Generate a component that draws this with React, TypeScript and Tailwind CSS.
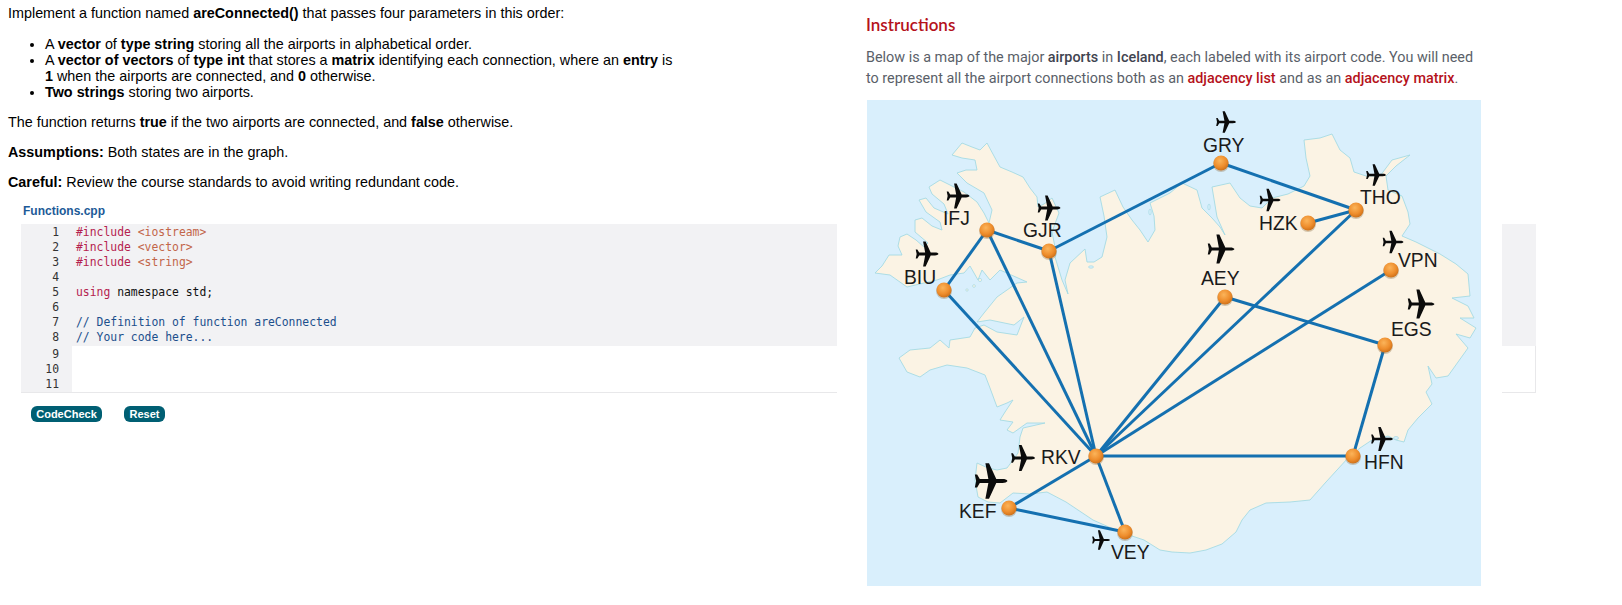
const nodes: Record<string, [number, number]> = {
  IFJ: [987, 230],
  GJR: [1049, 251],
  BIU: [944, 290],
  GRY: [1221, 163],
  THO: [1356, 210],
  HZK: [1308, 223],
  VPN: [1391, 270],
  AEY: [1225, 297],
  EGS: [1385, 345],
  RKV: [1096, 456],
  KEF: [1009, 508],
  VEY: [1125, 532],
  HFN: [1353, 456],
};

const edges = [
  ['IFJ', 'GJR'],
  ['IFJ', 'BIU'],
  ['IFJ', 'RKV'],
  ['BIU', 'RKV'],
  ['GJR', 'RKV'],
  ['GJR', 'GRY'],
  ['GRY', 'THO'],
  ['HZK', 'THO'],
  ['THO', 'RKV'],
  ['AEY', 'RKV'],
  ['AEY', 'EGS'],
  ['VPN', 'RKV'],
  ['EGS', 'HFN'],
  ['RKV', 'HFN'],
  ['RKV', 'KEF'],
  ['RKV', 'VEY'],
  ['KEF', 'VEY'],
];

// label: text, x, baseline y
const labels: [string, number, number][] = [
  ['GRY', 1203, 152],
  ['THO', 1360, 204],
  ['HZK', 1259, 230],
  ['VPN', 1398, 267],
  ['AEY', 1201, 285],
  ['EGS', 1391, 336],
  ['IFJ', 943, 225],
  ['GJR', 1023, 237],
  ['BIU', 904, 284],
  ['RKV', 1041, 464],
  ['KEF', 959, 518],
  ['VEY', 1111, 559],
  ['HFN', 1364, 469],
];

// plane: centre x, centre y, width
const planes: [number, number, number][] = [
  [1226, 122, 20],
  [1376, 175, 20],
  [1270, 200, 21],
  [1221, 249, 27],
  [1393, 242, 21],
  [1421, 304, 27],
  [958, 196, 23],
  [1049, 208, 23],
  [927, 254, 23],
  [1023, 458, 24],
  [991, 481, 33],
  [1101, 540, 18],
  [1382, 439, 22],
];

const ICELAND =
  'M875 273 L882 266 L889 255 L902 255 L898 246 L900 237 L907 234 L916 240 L924 247 L928 243 L915 232 L915 220 L922 218 L932 226 L942 230 L940 222 L926 212 L919 200 L926 198 L934 208 L948 214 L944 204 L932 194 L929 187 L940 180 L952 186 L964 192 L977 202 L984 213 L989 223 L992 210 L984 193 L967 183 L957 173 L966 170 L977 170 L975 160 L962 158 L952 155 L962 143 L972 147 L980 150 L987 143 L994 156 L1000 167 L1012 172 L1023 177 L1030 188 L1037 197 L1038 207 L1044 204 L1052 198 L1059 213 L1052 232 L1056 252 L1055 257 L1062 280 L1068 294 L1065 280 L1070 263 L1085 249 L1087 262 L1094 262 L1102 257 L1107 237 L1104 216 L1100 197 L1115 190 L1123 207 L1132 220 L1140 230 L1148 242 L1155 230 L1154 216 L1150 203 L1160 198 L1170 193 L1182 183 L1197 190 L1202 208 L1212 218 L1220 227 L1225 235 L1217 217 L1212 187 L1230 183 L1240 198 L1250 206 L1262 208 L1272 198 L1288 194 L1304 186 L1310 176 L1306 158 L1304 140 L1320 138 L1332 134 L1340 150 L1350 158 L1354 172 L1366 176 L1380 176 L1392 160 L1410 155 L1396 166 L1386 176 L1388 190 L1402 196 L1408 212 L1410 224 L1402 236 L1416 242 L1440 254 L1456 264 L1468 274 L1470 296 L1452 298 L1468 306 L1474 318 L1460 318 L1476 328 L1470 338 L1456 334 L1468 348 L1448 376 L1436 378 L1428 366 L1432 384 L1426 392 L1432 404 L1418 418 L1408 430 L1404 442 L1396 440 L1388 436 L1372 440 L1360 448 L1348 458 L1326 482 L1310 500 L1290 502 L1266 503 L1250 510 L1242 520 L1236 532 L1222 544 L1206 550 L1190 553 L1172 552 L1160 550 L1144 540 L1120 532 L1093 520 L1066 502 L1047 492 L1030 494 L1013 493 L1000 503 L988 502 L978 497 L975 480 L977 463 L988 468 L997 470 L1007 468 L1018 453 L1020 437 L1023 428 L1045 423 L1027 423 L1013 433 L1007 430 L1013 422 L1000 420 L1005 412 L1013 400 L1007 403 L997 407 L990 388 L985 375 L967 368 L947 365 L930 370 L920 377 L907 372 L899 358 L910 350 L930 348 L940 340 L949 348 L950 340 L970 337 L975 328 L984 325 L997 332 L1017 335 L1024 317 L1014 325 L990 320 L977 322 L984 313 L997 297 L1017 283 L1027 282 L1000 270 L990 280 L982 270 L978 280 L970 266 L964 273 L950 275 L937 280 L924 283 L907 287 L890 275 Z';

function Plane({ x, y, w }: { x: number; y: number; w: number }) {
  const s = w / 100;
  return (
    <path
      transform={`translate(${x - w / 2} ${y}) scale(${s})`}
      fill="#0b0b0b"
      d="M100 0 C98 -4 92 -6 85 -6 L66 -6 L44 -54 L33 -54 L42 -6 L16 -6 L8 -20 L1 -20 L5 0 L1 20 L8 20 L16 6 L42 6 L33 54 L44 54 L66 6 L85 6 C92 6 98 4 100 0 Z"
    />
  );
}

function IcelandMap() {
  return (
    <svg viewBox="867 100 614 486" className="block w-[614px] h-[486px]">
      <defs>
        <radialGradient id="ball" cx="42%" cy="35%" r="70%">
          <stop offset="0%" stopColor="#fbb45a" />
          <stop offset="60%" stopColor="#ee8d2c" />
          <stop offset="100%" stopColor="#c96c16" />
        </radialGradient>
      </defs>
      <rect x="867" y="100" width="614" height="486" fill="#d9effc" />
      <path d={ICELAND} fill="#fbf3e4" stroke="#a5dae3" strokeWidth="0.9" strokeLinejoin="round" />
      {/* small islands and lakes */}
      <g fill="#fbf3e4" stroke="#a5dae3" strokeWidth="0.7">
        <circle cx="967" cy="290" r="1.2" />
        <circle cx="974" cy="286" r="1.4" />
        <circle cx="980" cy="280" r="1.6" />
      </g>
      <g fill="#d9effc" stroke="#a5dae3" strokeWidth="0.7">
        <ellipse cx="1091" cy="267" rx="2.5" ry="1.2" />
        <ellipse cx="1150" cy="212" rx="1.2" ry="3" />
        <ellipse cx="1209" cy="207" rx="1.2" ry="3" />
        <ellipse cx="1396" cy="438" rx="2.5" ry="1.5" />
      </g>
      {edges.map(([a, b]) => (
        <line
          key={a + b}
          x1={nodes[a][0]}
          y1={nodes[a][1]}
          x2={nodes[b][0]}
          y2={nodes[b][1]}
          stroke="#1470b0"
          strokeWidth="3"
        />
      ))}
      {planes.map(([x, y, w]) => (
        <Plane key={`${x}-${y}`} x={x} y={y} w={w} />
      ))}
      {labels.map(([t, x, y]) => (
        <text key={t} x={x} y={y} fontSize="19.3" fill="#1a1a1a" fontFamily="'Liberation Sans', Arial, sans-serif">
          {t}
        </text>
      ))}
      {Object.entries(nodes).map(([k, [x, y]]) => (
        <g key={k}>
          <circle cx={x} cy={y + 1} r="8" fill="#8a6a40" opacity="0.35" />
          <circle cx={x} cy={y} r="7.5" fill="url(#ball)" />
        </g>
      ))}
    </svg>
  );
}

const lineNumbers = [1, 2, 3, 4, 5, 6, 7, 8];

function CodeEditor() {
  return (
    <div className="w-[1515px] ml-[21px] font-['DejaVu_Sans_Mono',monospace] text-[11.4px] leading-[15px] border-b border-[#e8e8ea]">
      {/* locked lines */}
      <div className="flex bg-[#f2f2f4] py-[1px]">
        <div className="w-[38px] text-right text-[#333] shrink-0">
          {lineNumbers.map((n) => (
            <div key={n}>{n}</div>
          ))}
        </div>
        <div className="pl-[17px] whitespace-pre text-[#111]">
          <div>
            <span className="text-[#b5224f]">#include</span> <span className="text-[#c2664a]">&lt;iostream&gt;</span>
          </div>
          <div>
            <span className="text-[#b5224f]">#include</span> <span className="text-[#c2664a]">&lt;vector&gt;</span>
          </div>
          <div>
            <span className="text-[#b5224f]">#include</span> <span className="text-[#c2664a]">&lt;string&gt;</span>
          </div>
          <div>&nbsp;</div>
          <div>
            <span className="text-[#b5224f]">using</span> namespace std;
          </div>
          <div>&nbsp;</div>
          <div className="text-[#1c4f8c]">// Definition of function areConnected</div>
          <div className="text-[#1c4f8c]">// Your code here...</div>
        </div>
      </div>
      {/* editable lines */}
      <div className="flex border-r border-[#e8e8ea]">
        <div className="w-[51px] pr-[13px] pt-[1px] text-right text-[#333] bg-[#f2f2f4] shrink-0">
          <div>9</div>
          <div>10</div>
          <div>11</div>
        </div>
        <div className="flex-1 bg-white" />
      </div>
    </div>
  );
}

export default function App() {
  return (
    <div className="relative w-[1622px] h-[605px] overflow-hidden bg-white font-['Liberation_Sans',Arial,sans-serif] text-[14.37px] leading-[16px] text-black">
      {/* Problem statement */}
      <div className="pt-[5px] pl-[8px] w-[680px]">
        <p>
          Implement a function named <b>areConnected()</b> that passes four parameters in this order:
        </p>
        <ul className="list-disc pl-[37px] mt-[15px]">
          <li>
            A <b>vector</b> of <b>type string</b> storing all the airports in alphabetical order.
          </li>
          <li>
            A <b>vector of vectors</b> of <b>type int</b> that stores a <b>matrix</b> identifying each connection, where an <b>entry</b> is <b>1</b> when the airports are connected, and <b>0</b> otherwise.
          </li>
          <li>
            <b>Two strings</b> storing two airports.
          </li>
        </ul>
        <p className="mt-[14px]">
          The function returns <b>true</b> if the two airports are connected, and <b>false</b> otherwise.
        </p>
        <p className="mt-[14px]">
          <b>Assumptions:</b> Both states are in the graph.
        </p>
        <p className="mt-[14px]">
          <b>Careful:</b> Review the course standards to avoid writing redundant code.
        </p>
      </div>

      <div className="mt-[14px] ml-[23px] text-[12px] leading-[14px] font-bold text-[#1d5a97]">Functions.cpp</div>
      <div className="mt-[6px]">
        <CodeEditor />
      </div>

      <div className="flex gap-[22px] ml-[31px] mt-[13px]">
        <button className="h-[16px] w-[71px] rounded-[6px] bg-[#005f73] text-white text-[11px] leading-[16px] font-bold">CodeCheck</button>
        <button className="h-[16px] w-[41px] rounded-[6px] bg-[#005f73] text-white text-[11px] leading-[16px] font-bold">Reset</button>
      </div>

      {/* Instructions panel sits on top of the editor */}
      <div className="absolute top-0 left-[837px] w-[665px] h-[605px] bg-white pl-[29px] pt-[15px]">
        <h2 className="font-['Lato',sans-serif] font-semibold text-[17px] leading-[20px] text-[#b5121b]">Instructions</h2>
        <p className="mt-[12px] w-[614px] font-['Roboto',sans-serif] text-[14.4px] leading-[21px] text-[#5a5f69]">
          Below is a map of the major <b className="font-medium text-[#3f4450]">airports</b> in <b className="font-medium text-[#3f4450]">Iceland</b>, each labeled with its airport code. You will need to represent all the airport connections both as an <b className="font-medium text-[#b5121b]">adjacency list</b> and as an <b className="font-medium text-[#b5121b]">adjacency matrix</b>.
        </p>
        <div className="mt-[11px] ml-[1px]">
          <IcelandMap />
        </div>
      </div>
    </div>
  );
}
